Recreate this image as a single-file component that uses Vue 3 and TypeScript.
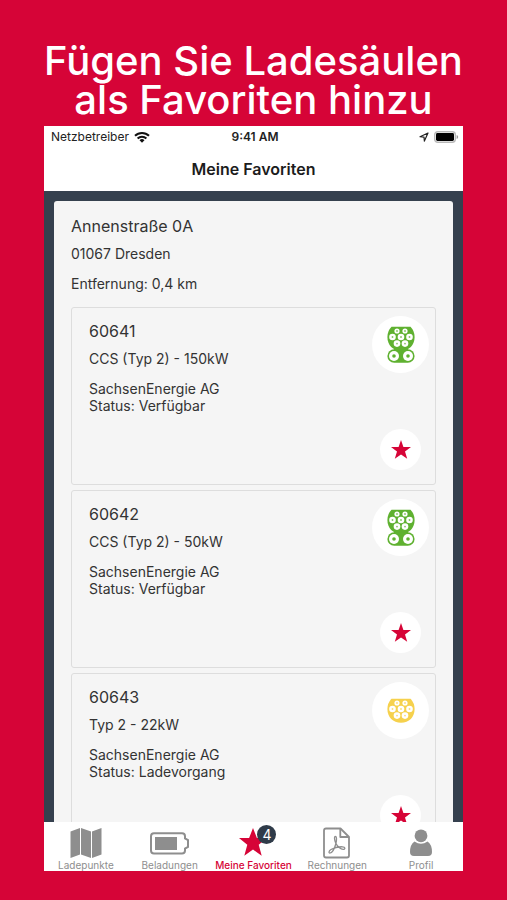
<script setup lang="ts">
import { ref } from 'vue'

interface Station {
  id: string
  plug: string
  operator: string
  status: string
  ccs: boolean
  free: boolean
}

interface Tab {
  key: string
  label: string
  badge?: number
}

const stations: Station[] = [
  { id: '60641', plug: 'CCS (Typ 2) - 150kW', operator: 'SachsenEnergie AG', status: 'Verfügbar', ccs: true, free: true },
  { id: '60642', plug: 'CCS (Typ 2) - 50kW', operator: 'SachsenEnergie AG', status: 'Verfügbar', ccs: true, free: true },
  { id: '60643', plug: 'Typ 2 - 22kW', operator: 'SachsenEnergie AG', status: 'Ladevorgang', ccs: false, free: false },
]

const tabs: Tab[] = [
  { key: 'map', label: 'Ladepunkte' },
  { key: 'charges', label: 'Beladungen' },
  { key: 'favorites', label: 'Meine Favoriten', badge: 4 },
  { key: 'invoices', label: 'Rechnungen' },
  { key: 'profile', label: 'Profil' },
]

const active = ref('favorites')

const pins: [number, number][] = [
  [10, 5], [18, 5],
  [5.5, 11], [14, 11], [22.5, 11],
  [10, 17.6], [18, 17.6],
]
</script>

<template>
  <div class="page">
    <h1 class="headline">Fügen Sie Ladesäulen<br />als Favoriten hinzu</h1>

    <div class="phone">
      <div class="status">
        <div class="carrier">
          <span>Netzbetreiber</span>
          <svg width="16" height="12" viewBox="0 0 16 12" aria-hidden="true">
            <g fill="none" stroke="#111" stroke-width="2">
              <path d="M1 4.8a10 10 0 0 1 14 0" />
              <path d="M3.6 7.5a6.3 6.3 0 0 1 8.8 0" />
            </g>
            <path d="M8 11.8 5.5 9.2a3.6 3.6 0 0 1 5 0z" fill="#111" />
          </svg>
        </div>
        <strong class="time">9:41 AM</strong>
        <div class="power">
          <svg width="10" height="10" viewBox="0 0 10 10" aria-hidden="true">
            <path d="M9 1 1 4.7l4 .4.4 4z" fill="none" stroke="#222" stroke-width="1.2" stroke-linejoin="round" />
          </svg>
          <svg width="25" height="12" viewBox="0 0 25 12" aria-hidden="true">
            <rect x=".7" y=".7" width="20.6" height="10.6" rx="3" fill="#fff" stroke="#b9b9b9" stroke-width="1.4" />
            <rect x="2" y="2" width="18" height="8" rx="1.4" fill="#000" />
            <path d="M22.6 4v4q1.6-.6 1.6-2t-1.6-2z" fill="#999" />
          </svg>
        </div>
      </div>

      <header class="title"><h2>Meine Favoriten</h2></header>

      <main class="content">
        <section class="place">
          <h3>Annenstraße 0A</h3>
          <p class="city">01067 Dresden</p>
          <p class="distance">Entfernung: 0,4 km</p>

          <article v-for="s in stations" :key="s.id" class="station">
            <div class="info">
              <h4>{{ s.id }}</h4>
              <p class="plug">{{ s.plug }}</p>
              <p>{{ s.operator }}</p>
              <p>Status: {{ s.status }}</p>
            </div>
            <div class="actions">
              <div class="connector" :class="{ busy: !s.free }">
                <svg width="28" :height="s.ccs ? 37 : 26" :viewBox="s.ccs ? '0 0 28 37' : '0 0 28 26'" aria-hidden="true">
                  <path d="M4.5.8h19Q27.6 5 27.6 11C27.6 19 22 24.8 14 24.8S.4 19 .4 11Q.4 5 4.5.8z" fill="currentColor" />
                  <template v-if="s.ccs">
                    <path d="M7 20.500h14v4h-14z" fill="currentColor" />
                    <rect x=".4" y="23.2" width="27.2" height="13.6" rx="6.8" fill="currentColor" />
                    <g v-for="x in [7, 21]" :key="x">
                      <circle :cx="x" cy="30" r="5" fill="#fff" />
                      <circle :cx="x" cy="30" r="1.800" fill="currentColor" />
                    </g>
                  </template>
                  <g v-for="([x, y], i) in pins" :key="i">
                    <circle :cx="x" :cy="y" :r="y === 5 ? 2.6 : 3.300" fill="#fff" />
                    <circle :cx="x" :cy="y" r=".9" fill="currentColor" opacity=".75" />
                  </g>
                </svg>
              </div>
              <button type="button" class="star" aria-label="Favorit">
                <svg width="20" height="19" viewBox="0 0 20 19" aria-hidden="true">
                  <path d="M10 0l2.400 7H20l-6 4.500 2.200 7.300L10 14.400l-6.200 4.400L6 11.500 0 7h7.600z" fill="currentColor" />
                </svg>
              </button>
            </div>
          </article>
        </section>
      </main>

      <nav class="tabs">
        <button
          v-for="t in tabs"
          :key="t.key"
          type="button"
          class="tab"
          :class="{ active: active === t.key }"
          @click="active = t.key"
        >
          <span class="icon">
            <svg v-if="t.key === 'map'" width="32" height="32" viewBox="0 0 32 32" aria-hidden="true">
              <path d="M.5 4.500 10 1v26.500l-9.500 3.500zM11 1l10 3.500v26.500L11 27.500zM22 4.500 31.500 1v26.500L22 31z" fill="currentColor" />
            </svg>
            <svg v-else-if="t.key === 'charges'" width="40" height="32" viewBox="0 0 40 32" aria-hidden="true">
              <path d="M4 6.200h28q3 0 3 3v2.300l3 1.500v7l-3 1.500v2q0 3-3 3H4q-3 0-3-3V9.200q0-3 3-3z" fill="none" stroke="currentColor" stroke-width="2" />
              <rect x="5" y="10" width="22" height="13" fill="currentColor" />
            </svg>
            <svg v-else-if="t.key === 'favorites'" width="30" height="32" viewBox="0 0 30 32" aria-hidden="true">
              <path d="M15 1l3.900 10H29l-8.300 6.700 3 11L15 22.500l-8.700 6.200 3-11L1 11h10.100z" fill="currentColor" />
            </svg>
            <svg v-else-if="t.key === 'invoices'" width="28" height="32" viewBox="0 0 28 32" aria-hidden="true">
              <g fill="none" stroke="currentColor" stroke-width="1.800" stroke-linejoin="round">
                <path d="M3 1.500h14.500L26 10v18.500q0 2-2 2H3q-2 0-2-2v-25q0-2 2-2z" />
                <path d="M17.300 1.500V10H26" />
                <path d="M12.500 9.500c-1.600 0-1 3.500.2 6.500 1.600 3.500 5 6.300 7.500 6.300 2.300 0 2.300-2.300-.7-2.500-4-.2-8.500.9-11.500 2.700-2.500 1.500-2.500 4-.8 3.500 2-.6 4.500-5 5.700-9.500.8-3.500 1-7-.4-7z" stroke-width="1.300" />
              </g>
            </svg>
            <svg v-else width="24" height="32" viewBox="0 0 24 32" aria-hidden="true">
              <circle cx="12" cy="8.800" r="6.400" fill="currentColor" />
              <path d="M5.500 14.500q6.500 4.500 13 0 4.500 3 4.500 10.500 0 4-4 4H5q-4 0-4-4 0-7.500 4.500-10.500z" fill="currentColor" />
            </svg>
            <span v-if="t.badge" class="badge">{{ t.badge }}</span>
          </span>
          <span class="label">{{ t.label }}</span>
        </button>
      </nav>
    </div>
  </div>
</template>

<style>
body {
  margin: 0;
  background: #d60437;
}
</style>

<style scoped>
.page {
  box-sizing: border-box;
  display: flex;
  flex-direction: column;
  height: 100vh;
  padding: 41px 44px 29px;
  background: #d60437;
  color: #333;
  font-family: Inter, "Liberation Sans", sans-serif;
}
h1, h2, h3, h4, p {
  margin: 0;
}
.headline {
  margin: 0 -40px 7px;
  color: #fff;
  font-size: 40px;
  font-weight: 500;
  line-height: 39px;
  text-align: center;
  white-space: nowrap;
}
.phone {
  display: flex;
  flex: 1;
  flex-direction: column;
  min-height: 0;
  background: #fff;
}
.status {
  display: grid;
  grid-template-columns: 1fr auto 1fr;
  align-items: center;
  height: 21px;
  padding: 0 4px 0 7px;
  color: #222;
  font-size: 12px;
}
.carrier, .power {
  display: flex;
  align-items: center;
  gap: 5px;
}
.power {
  justify-content: flex-end;
}
.time {
  font-weight: 600;
}
.title {
  display: flex;
  align-items: center;
  justify-content: center;
  height: 44px;
}
.title h2 {
  color: #1c1c1c;
  font-size: 16px;
  font-weight: 600;
}
.content {
  flex: 1;
  min-height: 0;
  padding: 10px 10px 0;
  overflow-y: auto;
  scrollbar-width: none;
  background: #35404e;
}
.place {
  padding: 15px 17px 17px;
  border-radius: 3px;
  background: #f5f5f5;
  font-size: 14px;
}
h3, h4 {
  font-size: 16px;
  font-weight: 400;
  line-height: 20px;
}
.city {
  margin-top: 9px;
  line-height: 18px;
}
.distance {
  margin: 12px 0 14px;
  line-height: 18px;
}
.station {
  box-sizing: border-box;
  display: flex;
  justify-content: space-between;
  height: 178px;
  margin-bottom: 5px;
  padding: 8px 6px 14px 17px;
  border: 1px solid #ddd;
  border-radius: 3px;
}
.info {
  padding-top: 5px;
  line-height: 17px;
}
.plug {
  margin: 9px 0 13px;
}
.actions {
  display: flex;
  flex-direction: column;
  align-items: center;
  justify-content: space-between;
}
.connector, .star {
  display: flex;
  align-items: center;
  justify-content: center;
  border-radius: 50%;
  background: #fff;
}
.connector {
  width: 57px;
  height: 57px;
  color: #5fb130;
}
.connector.busy {
  color: #f6d14d;
}
.star {
  width: 41px;
  height: 41px;
  padding: 0;
  border: 0;
  color: #d60437;
}
.tabs {
  display: grid;
  grid-template-columns: repeat(5, 1fr);
  height: 49px;
}
.tab {
  display: flex;
  flex-direction: column;
  align-items: center;
  min-width: 0;
  padding: 5px 0 0;
  border: 0;
  background: none;
  color: #8e8e8e;
  font: inherit;
}
.tab.active {
  color: #d60437;
}
.icon {
  position: relative;
  height: 32px;
}
.icon svg {
  display: block;
}
.badge {
  position: absolute;
  top: -2px;
  right: -8px;
  width: 19px;
  height: 19px;
  border-radius: 50%;
  background: #2f3b49;
  color: #fff;
  font-size: 14px;
  line-height: 19px;
}
.label {
  font-size: 10px;
  line-height: 12px;
  white-space: nowrap;
}
.active .label {
  font-weight: 500;
}
</style>
